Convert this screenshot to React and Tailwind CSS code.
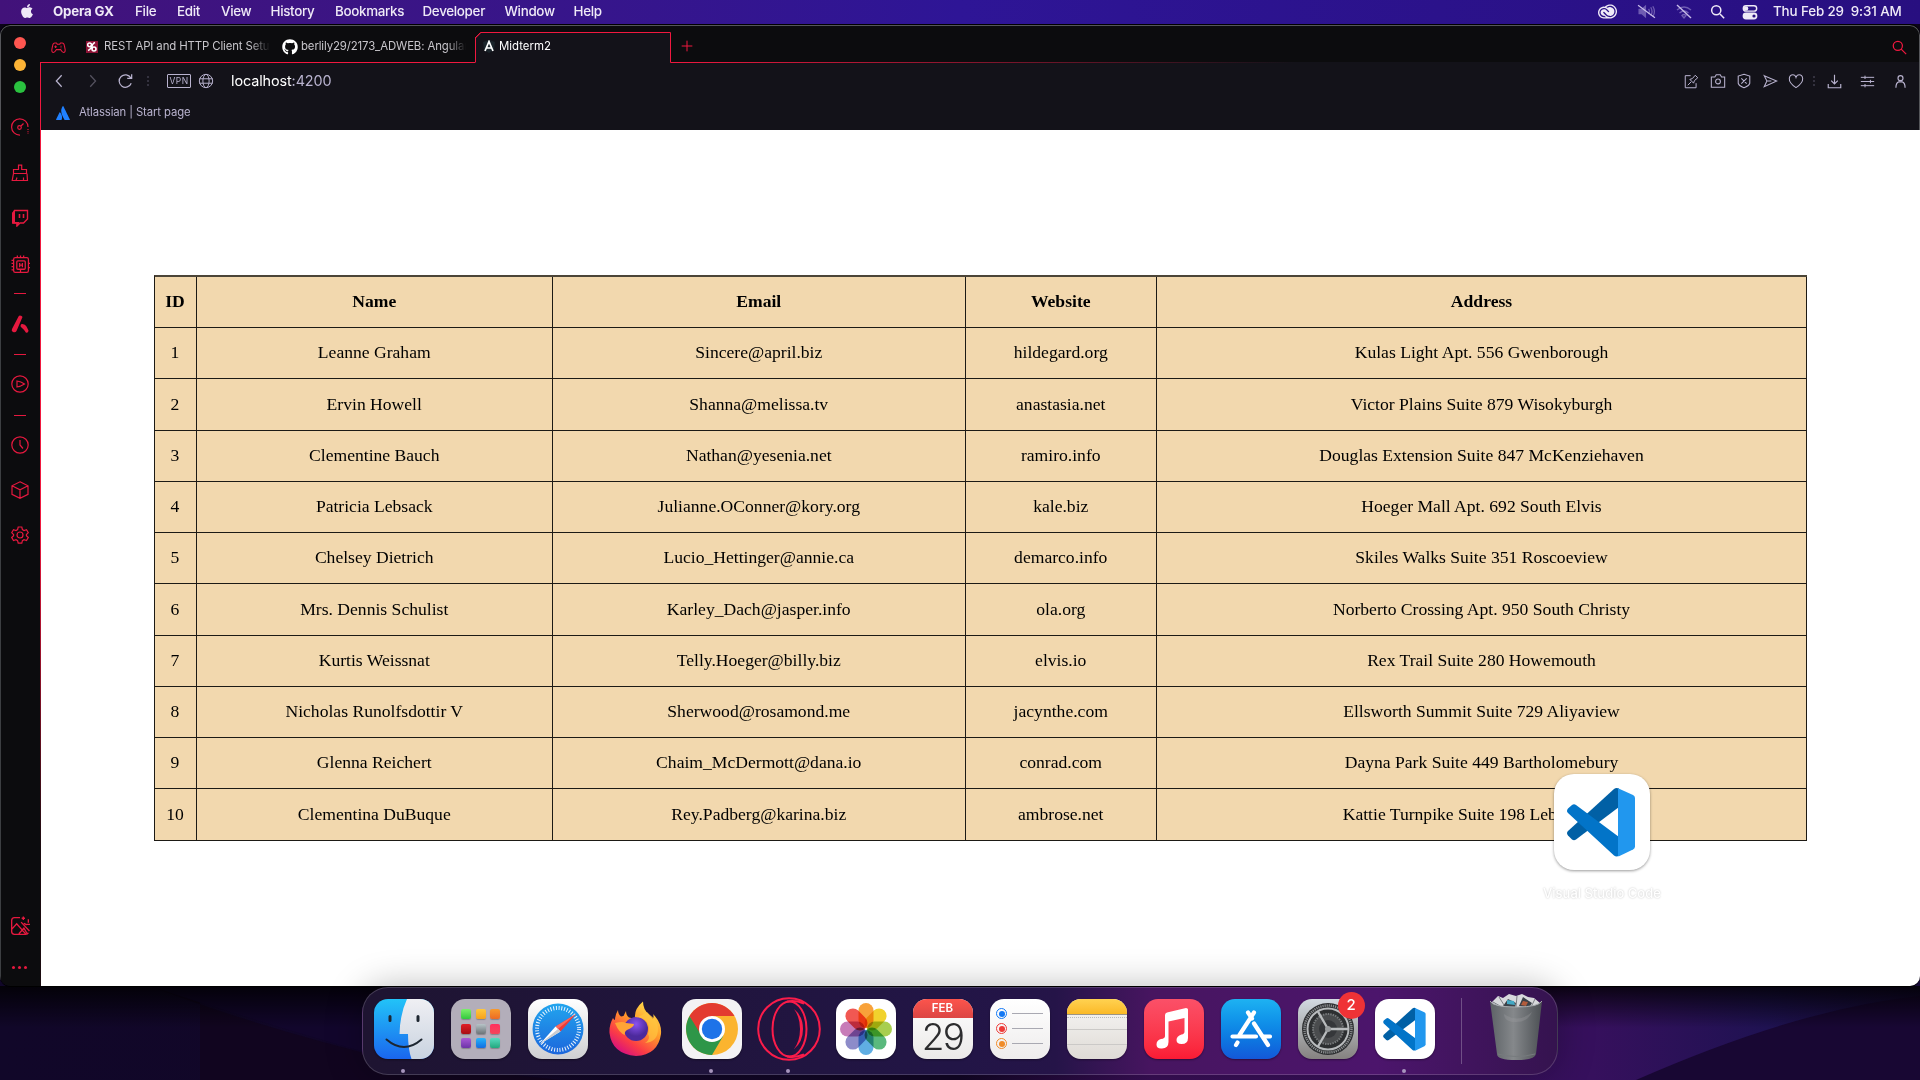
import React from "react";
import { FaApple, FaGithub, FaAtlassian } from "react-icons/fa";
import { SiAdobecreativecloud } from "react-icons/si";

const MENUS = [
  ["File", "w-[42px]"], ["Edit", "w-[44px]"], ["View", "w-[49.5px]"], ["History", "w-[64.5px]"],
  ["Bookmarks", "w-[87.5px]"], ["Developer", "w-[82px]"], ["Window", "w-[69px]"], ["Help", "w-[40px]"],
];

const USERS = [
  ["Leanne Graham", "Sincere@april.biz", "hildegard.org", "Kulas Light Apt. 556 Gwenborough"],
  ["Ervin Howell", "Shanna@melissa.tv", "anastasia.net", "Victor Plains Suite 879 Wisokyburgh"],
  ["Clementine Bauch", "Nathan@yesenia.net", "ramiro.info", "Douglas Extension Suite 847 McKenziehaven"],
  ["Patricia Lebsack", "Julianne.OConner@kory.org", "kale.biz", "Hoeger Mall Apt. 692 South Elvis"],
  ["Chelsey Dietrich", "Lucio_Hettinger@annie.ca", "demarco.info", "Skiles Walks Suite 351 Roscoeview"],
  ["Mrs. Dennis Schulist", "Karley_Dach@jasper.info", "ola.org", "Norberto Crossing Apt. 950 South Christy"],
  ["Kurtis Weissnat", "Telly.Hoeger@billy.biz", "elvis.io", "Rex Trail Suite 280 Howemouth"],
  ["Nicholas Runolfsdottir V", "Sherwood@rosamond.me", "jacynthe.com", "Ellsworth Summit Suite 729 Aliyaview"],
  ["Glenna Reichert", "Chaim_McDermott@dana.io", "conrad.com", "Dayna Park Suite 449 Bartholomebury"],
  ["Clementina DuBuque", "Rey.Padberg@karina.biz", "ambrose.net", "Kattie Turnpike Suite 198 Lebsackbury"],
];

function Line({ size = 18, w = 1.2, className = "", children }) {
  return (
    <svg width={size} height={size} viewBox="0 0 18 18" fill="none" stroke="currentColor" strokeWidth={w} className={"shrink-0 " + className}>
      {children}
    </svg>
  );
}

function Wallpaper() {
  return (
    <svg className="absolute inset-0" width="1920" height="1080" viewBox="0 0 1920 1080" preserveAspectRatio="none">
      <defs>
        <linearGradient id="wp" x1="0" x2="1" y1="0" y2="0">
          <stop offset="0" stopColor="#110729" /><stop offset=".5" stopColor="#120626" />
          <stop offset=".6" stopColor="#3a0f58" /><stop offset=".83" stopColor="#36105d" />
          <stop offset=".92" stopColor="#1f1252" /><stop offset="1" stopColor="#170a38" />
        </linearGradient>
        <linearGradient id="wpshade" x1="0" x2="0" y1="0" y2="1">
          <stop offset="0" stopColor="#000" stopOpacity=".8" /><stop offset="1" stopColor="#000" stopOpacity="0" />
        </linearGradient>
      </defs>
      <rect width="1920" height="1080" fill="#0b0418" />
      <rect y="970" width="1920" height="110" fill="url(#wp)" />
      <path d="M150 986 Q250 1025 400 1062 L560 1080 H200 V986 Z" fill="#12051d" opacity=".8" />
      <path d="M150 986 Q250 1020 400 1062 V986 Z" fill="#12062c" />
      <path d="M1636 1080 Q1800 1008 1920 996 V1080 Z" fill="#180733" />
      <rect y="986" width="1920" height="42" fill="url(#wpshade)" />
    </svg>
  );
}

function MenuBar() {
  return (
    <div className="relative flex h-6 items-center bg-linear-to-r from-[#42127a] via-[#2e1596] to-[#280f80] pb-px text-[13.4px] font-medium text-[#efeaf7]">
      <div className="flex w-[53px] justify-center pb-px"><FaApple size={16} /></div>
      <div className="w-[82px] whitespace-nowrap text-[13.3px] font-bold tracking-[-0.2px]">Opera GX</div>
      {MENUS.map(([m, w]) => <div key={m} className={w + " whitespace-nowrap tracking-[-0.32px]"}>{m}</div>)}
      <div className="flex-1" />
      <div className="flex h-full w-[175px] items-center">
        <SiAdobecreativecloud size={19} className="mr-[20px]" />
        <Line size={19} w={1.2} className="mr-[19px] text-[#6f5cb2]">
          <path d="M2 7v4h2.500l3.500 3V4L4.500 7z" fill="currentColor" /><path d="M11 6.500q1.500 2.500 0 5M13 5q2.500 4 0 8M15 4q3 5 0 10" /><path d="M1 3l16 12" stroke="#c8bde8" />
        </Line>
        <Line size={18} w={1.4} className="mr-[17px] text-[#6f5cb2]">
          <path d="M2 7q7-6 14 0M4.500 10q4.500-4 9 0M7 12.500q2-2 4 0L9 15z" /><path d="M2 2l14 13" stroke="#c8bde8" />
        </Line>
        <Line size={15} w={1.8} className="mr-[17px]"><circle cx="7.500" cy="7.500" r="5.500" /><path d="M12 12l5 5" /></Line>
        <Line size={16} w={1.6}><rect x="1.500" y="2" width="15" height="6" rx="3" /><rect x="1.500" y="10.500" width="15" height="6" rx="3" fill="currentColor" /><circle cx="4.500" cy="5" r="2.600" fill="currentColor" stroke="none" /><circle cx="13.500" cy="13.500" r="1.800" fill="#28107f" stroke="none" /></Line>
      </div>
      <div className="w-[147px] whitespace-pre tracking-[-0.13px]">Thu Feb 29  9:31 AM</div>
    </div>
  );
}

function Sidebar() {
  const cell = "flex w-full shrink-0 items-center justify-center ";
  return (
    <div className="flex w-10 shrink-0 flex-col items-center border-l border-[#3d3f42] bg-[#0c0c0e] pr-[2px] pt-[7px] text-[#e6193f]">
      {["bg-[#ff5650]", "bg-[#fdb436]", "bg-[#2ac23f]"].map((c) => (
        <div key={c} className={cell + "h-[22px]"}><div className={"h-3 w-3 rounded-full " + c} /></div>
      ))}
      <div className={cell + "mt-[6px] h-[46px]"}>
        <Line><path d="M9 17.200A8.200 8.200 0 1 1 17 9" /><circle cx="8.500" cy="9.500" r="1.800" /><path d="M10 8l2.500-2.500" /><path d="M17 11v5" strokeDasharray="1 1.200" /></Line>
      </div>
      <div className={cell + "h-[46px]"}>
        <Line className="-mt-px ml-px"><path d="M7.500 5.500V1.200h3.200v4.300h4.800v4h-13v-4zM2.500 9.500L1.200 16.500h15.300l-.5-7M5 16.500l1-3M12.500 16.500v-3" /></Line>
      </div>
      <div className={cell + "h-[45px]"}>
        <Line w={1.4} className="-mt-px ml-px"><path d="M3.500 1.500h13v8.500l-4 4h-3.500l-3 3v-3H2V4z" /><path d="M1 4l3-3v12h4v1.500l-2.500 3v-3H1z" fill="currentColor" stroke="none" /><path d="M8.500 5v4M12.500 5v4" strokeWidth="1.600" /></Line>
      </div>
      <div className={cell + "h-[46px]"}>
        <Line size={19} className="ml-[2px]"><rect x="2.500" y="2.500" width="14" height="14" rx="1.500" /><rect x="5.500" y="5.500" width="8" height="8" rx="1" /><path d="M8.200 7.500v4M10.800 7.500v4M8.200 9.500h2.600M6 .5v2M9 .5v2M12 .5v2M.5 5h2M.5 8h2M.5 11h2M.5 14h2M16.500 8h1.500M16.500 12h1.500M9 13.500v3" /></Line>
      </div>
      <div className={cell + "h-3"}><div className="h-px w-3 bg-current" /></div>
      <div className={cell + "h-[50px]"}>
        <Line w={0}><path d="M9 .5q2 0 2.500 1.500L5.500 16q-1 2-3.500 1Q0 16 1 14L7.500 1.500Q8 .5 9 .5zM10.500 9q3.500-.5 5 2.500l2 4q0 2.500-2.500 2.200-2.500-3.700-4.500-5.200-2-1.500 0-3.500z" fill="currentColor" /></Line>
      </div>
      <div className={cell + "h-[10px]"}><div className="h-px w-3 bg-current" /></div>
      <div className={cell + "h-[50px]"}><Line><circle cx="9" cy="9" r="8.200" /><path d="M6 6v6q3.500-.5 7.500-3Q10 6.500 6 6z" /></Line></div>
      <div className={cell + "h-3"}><div className="h-px w-3 bg-current" /></div>
      <div className={cell + "h-[47px]"}><Line><circle cx="9" cy="9" r="8.200" /><path d="M9 4v5l3 3.500" /></Line></div>
      <div className={cell + "h-[45px]"}><Line className="-mt-px"><path d="M9 .8l8 4v8.500l-8 4-8-4V4.800zM1 4.800l8 4 8-4M9 8.800v8.500" /></Line></div>
      <div className={cell + "h-[45px]"}>
        <Line className="-mt-px"><path d="M7.200 1h3.600l.6 2.500 1.600 1 2.500-.8 1.800 3-1.900 1.800v1.200l1.900 1.800-1.800 3-2.500-.8-1.600 1-.6 2.500H7.200l-.6-2.500-1.600-1-2.500.8-1.800-3 1.900-1.800V8.500L.7 6.700l1.800-3 2.500.8 1.600-1z" /><circle cx="9" cy="9" r="3" /></Line>
      </div>
      <div className="flex-1" />
      <div className={cell + "h-[44px]"}>
        <Line size={20} className="ml-px"><path d="M9 1.500H4Q1.500 1.500 1.500 4v10q0 2.500 2.500 2.500h10q2 0 2.500-1.500M1.500 12l4.500-5 8.500 9.500M8 16l4.500-5 3 5M10 5.500l7.500 8M12 .5v3M10.500 2h3M16.500 3v3M15 7.500h3M12.500 6.500l2.500 1.500" /></Line>
      </div>
      <div className={cell + "h-[38px] gap-[3px]"}>
        {[0, 1, 2].map((i) => <div key={i} className="h-[3px] w-[3px] rounded-full bg-current" />)}
      </div>
    </div>
  );
}

function TabBar() {
  return (
    <div className="flex h-[38px] shrink-0 bg-[#0c0c0e] text-[11.4px] text-[#c8c6cb]">
      <div className="flex w-[435px] items-center border-b border-[#f0183f] pt-[7px]">
        <div className="flex w-[46px] justify-start pl-[11px] text-[#e6193f]">
          <Line size={15} w={1.3}><path d="M4.500 3.500h2l1 1.500h3l1-1.500h2q2 0 2.500 3l1 5q.3 3.500-2 3.500-1.500 0-3.500-3.500h-5Q4.500 15 3 15 .7 15 1 11.500l1-5q.5-3 2.500-3zM4 8h3M5.500 6.500v3M12 7v1M12 9v1" /></Line>
        </div>
        <div className="flex w-[196px] items-center">
          <svg width="12" height="12" viewBox="0 0 12 12" className="mr-[6px] shrink-0"><rect width="12" height="12" fill="#8d1436" /><circle cx="3.600" cy="3.800" r="1.900" stroke="#fff" strokeWidth="1.500" fill="none" /><circle cx="8" cy="8" r="2" stroke="#fff" strokeWidth="1.600" fill="none" /><path d="M5.500 4q0 4-3.500 5.500M6 8q-.5-5 3-6.500" stroke="#fff" strokeWidth="1.400" fill="none" /></svg>
          <div className="w-[166px] overflow-hidden whitespace-nowrap mask-r-from-88% mask-r-to-100% tracking-[-0.12px]">REST API and HTTP Client Setup</div>
        </div>
        <div className="flex items-center">
          <FaGithub size={16} className="mr-[3px] shrink-0 text-white" />
          <div className="w-[165px] overflow-hidden whitespace-nowrap mask-r-from-88% mask-r-to-100% tracking-[-0.12px]">berlily29/2173_ADWEB: Angular</div>
        </div>
      </div>
      <div className="relative flex w-[196px] items-center pt-[6px]">
        <svg className="absolute left-0 top-0" width="196" height="38" viewBox="0 0 196 38"><path d="M0 38V13L6 7.500H195.500V38z" fill="#131219" /><path d="M-.5 37.500V13.500L5.500 7.500H195.500V37.500H196" fill="none" stroke="#f0183f" /><path d="M.5 37.500V13L6 7.500" fill="none" stroke="#f0183f" /></svg>
        <div className="relative flex items-center pl-[8px] text-white">
          <svg width="12" height="13" viewBox="0 0 12 13" className="mr-[4px]"><path d="M6 0l6 2-1 8-5 3-5-3-1-8z" fill="#1b242b" /><path d="M2 11L6 1.500 10 11M3.500 8h5" fill="none" stroke="#fff" strokeWidth="1.700" /></svg>
          <span>Midterm2</span>
        </div>
      </div>
      <div className="flex flex-1 items-center justify-between border-b pl-[10px] pr-[13px] pt-[4px] text-[#f0183f] [border-image:linear-gradient(to_right,#f0183f,#131219_50%)_1]">
        <Line size={12} w={1.5}><path d="M9 1v16M1 9h16" /></Line>
        <Line size={15} w={1.5} className="mt-[3px]"><circle cx="7" cy="7" r="5.500" /><path d="M11 11l6 6" /></Line>
      </div>
    </div>
  );
}

function Toolbar() {
  const dots = (
    <svg width="2" height="12" viewBox="0 0 2 12" fill="#34323f" className="shrink-0"><rect y="1" width="2" height="2" /><rect y="5" width="2" height="2" /><rect y="9" width="2" height="2" /></svg>
  );
  return (
    <div className="flex h-[36px] shrink-0 items-center text-[#b9b3cf]">
      <Line size={16} className="ml-[10px]" w={1.4}><path d="M12 2.500L6 9l6 6.500" /></Line>
      <Line size={16} className="ml-[17px] text-[#55525f]" w={1.4}><path d="M7 2.500l6 6.500-6 6.500" /></Line>
      <Line size={16} className="ml-[17px]" w={1.4}><path d="M15.500 5.500A7 7 0 1 0 16 11.500M16.500 1.500v4.500h-5" /></Line>
      <div className="ml-[14px] flex">{dots}</div>
      <div className="ml-[18px] flex h-[14px] w-6 items-center justify-center rounded-[1px] border border-[#b9b3cf] text-[8.5px] leading-none tracking-[0.5px]">VPN</div>
      <Line size={16} className="ml-[7px]" w={1.1}><circle cx="9" cy="9" r="7.500" /><ellipse cx="9" cy="9" rx="3.500" ry="7.500" /><path d="M1.500 6.500h15M1.500 11.500h15" /></Line>
      <div className="ml-[17px] text-[14.4px] tracking-[-0.1px]"><span className="text-white">localhost</span>:4200</div>
      <div className="flex-1" />
      <Line size={15} className="mr-[11px]" w={1.2}><path d="M8 2H1.500v14.500h13V11M4.500 13.500l4-4M7 6.500l4.500 4.500 1-3L16.500 4.500 13.500 1.500 10 5.500z" /></Line>
      <Line size={16} className="mr-[10px]" w={1.2}><path d="M1.500 4.500h4L7 2h4.500L13 4.500h3.500v11.500h-15z" /><circle cx="9" cy="9.500" r="2.700" /></Line>
      <Line size={16} className="mr-[10px]" w={1.2}><path d="M9 1.500l6.500 2v8q-1 3-6.500 5-5.500-2-6.500-5v-8zM6 6l6 6M12 6l-6 6" /></Line>
      <Line size={16} className="mr-[10px]" w={1.2}><path d="M2.500 3l14 6-14 6.500 3-6.500zM5.500 9h5" /></Line>
      <Line size={16} className="mr-[9px]" w={1.2}><path d="M9 16.500Q1 11 1.500 6 2 2 5.500 2 8 2 9 5q1-3 3.500-3Q16 2 16.500 6 17 11 9 16.500z" /></Line>
      {dots}
      <Line size={15} className="ml-[12px] mr-[18px]" w={1.4}><path d="M1.500 12v4.500h15V12M9 1v11M5 8l4 4 4-4" /></Line>
      <Line size={15} className="mr-[18px]" w={1.2}><path d="M1 4h16M1 9h16M1 14h16M6 2v4M12.500 7v4M6 12v4" /></Line>
      <Line size={15} className="mr-[12px]" w={1.4}><circle cx="9" cy="5" r="3" /><path d="M3.500 16.500q0-6 3.500-7h4q3.500 1 3.500 7" /></Line>
    </div>
  );
}

function Table() {
  const cell = "border-b border-r border-[#1d1a15] flex items-center justify-center pb-[1px]";
  const cols = "grid grid-cols-[42px_356.5px_412.5px_191.5px_650px]";
  return (
    <div className="ml-[112.5px] mt-[145px] flex w-[1653.5px] flex-col border-l border-t-2 border-[#1d1a15] border-t-[#4c4538] bg-[#f2d8ae] font-['Liberation_Serif',serif] text-[17.6px] text-black">
      <div className={cols + " h-[51px] font-bold"}>
        {["ID", "Name", "Email", "Website", "Address"].map((h) => <div key={h} className={cell}>{h}</div>)}
      </div>
      {USERS.map((u, i) => (
        <div key={i} className={cols + " h-[51.25px]"}>
          <div className={cell}>{i + 1}</div>
          {u.map((v) => <div key={v} className={cell}>{v}</div>)}
        </div>
      ))}
    </div>
  );
}

function VSCodeLogo({ size }) {
  return (
    <svg width={size} height={size} viewBox="0 0 96 96">
      <path d="M60 15q2-1.500 5-.5V33L22 65.500q-2 1.500-4 0L14 61.500q-2-2.500 0-4.500z" fill="#0160a5" />
      <path d="M60 81.500q2 1.500 5 .5V63L22 31q-2-1.500-4 0l-4 3.500q-2 2.500 0 4.500z" fill="#0274c8" />
      <path d="M64 14.200L79 21q2 1 2 3v48.500q0 2-2 3L65 82.300l-1-.3z" fill="#2197ee" />
    </svg>
  );
}

function Tile({ className = "", children }) {
  return <div className={"flex h-[60px] w-[60px] items-center justify-center overflow-hidden rounded-[14px] shadow-[0_1px_2px_rgba(0,0,0,0.4)] " + className}>{children}</div>;
}

function Finder() {
  return (
    <Tile>
      <svg width="60" height="60" viewBox="0 0 60 60">
        <defs><linearGradient id="fb" x2="0" y2="1"><stop stopColor="#22c3f8" /><stop offset="1" stopColor="#1a66ee" /></linearGradient><linearGradient id="fw" x2="0" y2="1"><stop stopColor="#efeff3" /><stop offset="1" stopColor="#c9d3e0" /></linearGradient></defs>
        <rect width="60" height="60" fill="url(#fb)" />
        <path d="M33 0Q26 15 25.500 35h8.500q0 15 3.500 25H60V0z" fill="url(#fw)" />
        <path d="M16 17.500v4M44 17.500v4" stroke="#1d2630" strokeWidth="3" strokeLinecap="round" />
        <path d="M12.500 40.500q17.500 15 35 0" fill="none" stroke="#1d2630" strokeWidth="2" strokeLinecap="round" />
      </svg>
    </Tile>
  );
}

function Launchpad() {
  const c = ["from-[#7af06a] to-[#2fc83d]", "from-[#ffc83d] to-[#f5a11c]", "from-[#f89a2c] to-[#ec6a24]", "from-[#e01f28] to-[#a80d14]", "from-[#b7c4c8] to-[#6d7478]", "from-[#ff2f5e] to-[#f5455a]", "from-[#a95ad6] to-[#6d34a8]", "from-[#28b4fa] to-[#176ce0]", "from-[#56dcc0] to-[#20a87e]"];
  return <Tile className="bg-[#b3aeba]"><div className="grid grid-cols-3 gap-[4.5px]">{c.map((x) => <div key={x} className={"h-[10px] w-[10px] rounded-[2px] bg-linear-to-b shadow-[0_1px_1px_rgba(0,0,0,0.25)] " + x} />)}</div></Tile>;
}

function Safari() {
  return (
    <Tile className="bg-linear-to-b from-white to-[#cfcfd2]">
      <svg width="52" height="52" viewBox="0 0 52 52">
        <defs><linearGradient id="sf" x2="0" y2="1"><stop stopColor="#22a5ee" /><stop offset="1" stopColor="#1c66dc" /></linearGradient></defs>
        <circle cx="26" cy="26" r="25.500" fill="url(#sf)" />
        <circle cx="26" cy="26" r="21" fill="none" stroke="#fff" strokeWidth="4" strokeDasharray="1 1.749" opacity=".9" />
        <path d="M44 11L28.500 28.500l-5-5z" fill="#ee3b38" /><path d="M44 11L23.500 23.500l2.500 2.500z" fill="#f96a60" />
        <path d="M8 41l15.500-17.500 5 5z" fill="#fff" /><path d="M8 41l18-15 2.500 2.500z" fill="#c9ccd0" />
      </svg>
    </Tile>
  );
}

function Firefox() {
  return (
    <div className="flex h-[60px] w-[60px] items-center justify-center">
      <svg width="60" height="60" viewBox="0 0 60 60">
        <defs>
          <linearGradient id="ff" x1=".9" y1=".1" x2=".3" y2="1"><stop stopColor="#ffe14c" /><stop offset=".4" stopColor="#ff9a2a" /><stop offset=".75" stopColor="#fb3d45" /><stop offset="1" stopColor="#d8107f" /></linearGradient>
          <radialGradient id="fp" cx=".5" cy=".3"><stop stopColor="#8a52f0" /><stop offset="1" stopColor="#4c2a9c" /></radialGradient>
        </defs>
        <path d="M13 11q0 4 3 6.500l2.500-.5 2.500-5q0 4 3 6.500 2 .5 6 .5-1-9 8-16.500 0 8 6 13l4 4.500q1-3 0-5 9 9 8 20-3 21-25 22Q7 55 4.500 34 4 26 8 19q1 2 2 2 0-5 3-10z" fill="url(#ff)" />
        <circle cx="31" cy="30" r="12" fill="url(#fp)" />
        <path d="M10 24q8-2 11 0l8 1q0 3-7 6-3 2-2 5-6-2-10-12z" fill="#ffa436" />
        <path d="M30 19q5-2 10 2 6 5 3 14 3 5-3 9 13-1 13-14 0-9-8-14l-3-3-5 3z" fill="#ffc640" opacity=".7" />
      </svg>
    </div>
  );
}

function Chrome() {
  return (
    <Tile className="bg-[#f3f2f4]">
      <svg width="54" height="54" viewBox="0 0 54 54">
        <circle cx="27" cy="27" r="26" fill="#fbb42f" />
        <path d="M4.500 14A26 26 0 0 1 49.500 14H27L14 33z" fill="#e33b30" />
        <path d="M4.500 14A26 26 0 0 0 27 53L38.500 33.500 27 38q-8 0-11.500-6z" fill="#2e9648" />
        <circle cx="27" cy="27" r="13" fill="#fff" /><circle cx="27" cy="27" r="10.200" fill="#1e73e8" />
      </svg>
    </Tile>
  );
}

function Opera() {
  return (
    <div className="-mx-[2px] flex h-[64px] w-[64px] items-center justify-center">
      <svg width="64" height="64" viewBox="0 0 64 64" fill="none" stroke="#fb1c4a" strokeWidth="2">
        <circle cx="32" cy="32" r="30.800" />
        <ellipse cx="32.500" cy="32" rx="17" ry="27.500" />
        <path d="M30 4.600Q38 3 47 6.500M30 59.400Q38 61 47 57.500" />
        <path d="M37 12q9 7 9 20t-9 20q6-8 6-20T37 12z" fill="#fb1c4a" stroke="none" />
      </svg>
    </div>
  );
}

function Photos() {
  const c = ["#f7951e", "#efcc10", "#9cc736", "#43b06b", "#4aa3df", "#7d7cc2", "#c06aae", "#f0413a"];
  return (
    <Tile className="bg-white">
      <svg width="56" height="56" viewBox="-28 -28 56 56">
        {c.map((f, i) => <rect key={f} x="-7.500" y="-26" width="15" height="25" rx="7.500" fill={f} opacity=".88" transform={"rotate(" + i * 45 + ")"} className="mix-blend-multiply" />)}
      </svg>
    </Tile>
  );
}

function Calendar() {
  return (
    <Tile className="flex-col bg-linear-to-b from-white to-[#ebe9e8]">
      <div className="flex h-[19px] w-full items-center justify-center bg-linear-to-b from-[#fc544c] to-[#dc4644] pt-[2px] text-[11.5px] font-semibold text-white">FEB</div>
      <div className="flex h-[41px] w-full items-center justify-center pb-[3px] text-[37px] font-light leading-none tracking-[-1.8px] text-[#2c2c2e]">29</div>
    </Tile>
  );
}

function Reminders() {
  return (
    <Tile className="flex-col gap-[4px] bg-linear-to-b from-white to-[#eeecec]">
      {[["border-[#1378f4]", "bg-[#1378f4]"], ["border-[#ed3b38]", "bg-[#ed3b38]"], ["border-[#f08b28]", "bg-[#f08b28]"]].map(([b, f]) => (
        <div key={f} className="flex w-[47px] items-center justify-between">
          <div className={"flex h-[11px] w-[11px] items-center justify-center rounded-full border " + b}><div className={"h-[6px] w-[6px] rounded-full " + f} /></div>
          <div className="h-px w-[31px] bg-[#a9a9b2]" />
        </div>
      ))}
    </Tile>
  );
}

function Notes() {
  return (
    <Tile className="flex-col justify-start! bg-linear-to-b from-[#f8f7f6] to-[#dfdbd6]">
      <div className="h-[15px] w-full bg-linear-to-b from-[#ffd250] to-[#fbb924]" />
      <div className="h-px w-full bg-[#9c9484]" />
      <div className="mt-[2px] w-full border-t border-dotted border-[#bbb]" />
      <div className="mt-[11px] h-px w-full bg-[#cbc9c7]" />
      <div className="mt-[14px] h-px w-full bg-[#cbc9c7]" />
    </Tile>
  );
}

function Music() {
  return (
    <Tile className="bg-linear-to-b from-[#fb5068] to-[#fa1a34]">
      <svg width="60" height="60" viewBox="0 0 60 60" fill="#fff"><path d="M21 16q0-2 2-2.500L42 9q2 0 2 1.500V39q0 6-6.500 6-5 0-5-4t5-5.500q3-.5 3-3V19l-16 3.500V43q0 6-6.500 6.500-5.500.5-5.500-4T17 40q4-.5 4-3z" /></svg>
    </Tile>
  );
}

function AppStore() {
  return (
    <Tile className="bg-linear-to-b from-[#1eb2f2] to-[#1458d8]">
      <svg width="60" height="60" viewBox="0 0 60 60" stroke="#fff" strokeWidth="4.200" strokeLinecap="round"><path d="M33 13.500L18.500 36M27 13.500l4 6M33 24.500l14 21.500M11.500 37.500h23.500M43 37.500h6M16.500 43.500l-1.500 2.500" /></svg>
    </Tile>
  );
}

function Settings() {
  return (
    <Tile className="bg-linear-to-b from-[#d3dbe2] to-[#858280]">
      <svg width="56" height="56" viewBox="-28 -28 56 56" fill="none">
        <circle r="26" fill="#2d2f31" /><circle r="23.500" stroke="#8b8e90" strokeWidth="2.500" strokeDasharray="1.200 .93" />
        <circle r="20.500" stroke="#b8bbbd" strokeWidth="2" /><circle r="15" fill="#4a4c4e" stroke="#75787a" strokeWidth="2" strokeDasharray="1.500 1" />
        <circle r="9" fill="#35373a" />
        <path d="M0 0H20M0 0L-10-17.300M0 0L-10 17.300" stroke="#b8bbbd" strokeWidth="2.300" /><circle r="3" fill="#999c9e" />
      </svg>
    </Tile>
  );
}

function Trash() {
  return (
    <svg width="54" height="70" viewBox="0 0 54 70">
      <defs><linearGradient id="tr"><stop stopColor="#5d6266" /><stop offset=".45" stopColor="#85888b" /><stop offset="1" stopColor="#4c5054" /></linearGradient></defs>
      <path d="M3 10L9 4l5 2 6-4 7 2 6-2 6 3 6 1 6 5-4 6H6z" fill="#d8d9dc" />
      <path d="M14 14l5-7 8 4-1 5zM30 14l4-9 9 6-3 5z" fill="#3b4148" /><path d="M18 8l7 1 1 4-8-1z" fill="#43a8c4" /><path d="M34 9l5 1-2 4-5-1z" fill="#b25c3c" /><path d="M4 10l7 4M10 5l5 8M28 4l-1 11M46 7l-4 8" stroke="#7b7e83" />
      <path d="M1 9q3 6 26 6t26-6l-6 53q-1 6-20 6T8 62z" fill="url(#tr)" />
      <path d="M1 9q3 6 26 6t26-6" fill="none" stroke="#a8acaf" />
      <path d="M9 62q18 5 37 0" fill="none" stroke="#777b7e" strokeWidth="1" /><path d="M15 22q14 10 28-2-4 10-16 10T15 22z" fill="#a1a3a6" opacity=".3" />
    </svg>
  );
}

function Dock() {
  const items = [[Finder, 1], [Launchpad, 0], [Safari, 0], [Firefox, 0], [Chrome, 1], [Opera, 1], [Photos, 0], [Calendar, 0], [Reminders, 0], [Notes, 0], [Music, 0], [AppStore, 0], [Settings, 0]];
  const slot = "relative flex h-full w-[60px] flex-col items-center justify-center pb-[5px]";
  const dot = <div className="absolute bottom-[1px] left-[27px] h-1 w-1 rounded-full bg-[#a795bd]" />;
  return (
    <div className="relative mx-auto mt-[1px] flex h-[88px] w-[1196px] items-center gap-[17px] rounded-[26px] border border-[#ffffff2b] pl-[10.5px] shadow-[0_0_36px_rgba(0,0,0,0.28)] bg-[linear-gradient(90deg,#1e1431,#221546_50%,#251448_58%,#471560_66%,#4c156c_85%,#35134f)]">
      {items.map(([C, running], i) => (
        <div key={i} className={slot}>
          <C />
          {running ? dot : null}
          {C === Settings && <div className="absolute -right-[7px] top-[4px] flex h-[27px] w-[27px] items-center justify-center rounded-full bg-[#ef3236] text-[15px] font-medium text-white">2</div>}
        </div>
      ))}
      <div className={slot}><Tile className="bg-white"><VSCodeLogo size={60} /></Tile>{dot}</div>
      <div className="ml-[9px] h-[66px] w-px bg-[#ffffff40]" />
      <div className="ml-[10px] flex h-full items-start pt-[4px]"><Trash /></div>
    </div>
  );
}

export default function App() {
  return (
    <div className="relative flex h-[1080px] w-[1920px] flex-col overflow-hidden bg-black font-[Inter,sans-serif]">
      <Wallpaper />
      <MenuBar />
      <div className="relative mt-px flex h-[961px] shrink-0 overflow-hidden rounded-[10px] shadow-[0_-1px_0_#000,0_1px_0_#000]">
        <Sidebar />
        <div className="flex min-w-0 flex-1 flex-col bg-[#131219]">
          <TabBar />
          <div className="flex flex-1 flex-col border-l [border-image:linear-gradient(to_bottom,#f0183f_50%,#1a0b10_85%)_1]">
            <Toolbar />
            <div className="flex h-[31px] shrink-0 items-center pb-[4px] pl-[15px] text-[11.3px] text-[#b9b3cf]">
              <FaAtlassian size={14} className="mr-[9px] text-[#2080ff]" />
              <span className="tracking-[-0.1px]">Atlassian | Start page</span>
            </div>
            <div className="flex-1 bg-white"><Table /></div>
          </div>
        </div>
        <div className="pointer-events-none absolute inset-0 h-[105px] rounded-t-[10px] border-x border-t border-[#55565a]" />
      </div>
      <Dock />
      <div className="absolute left-[1532px] top-[774px] flex w-[140px] flex-col items-center">
        <div className="flex h-24 w-24 items-center justify-center rounded-[20px] bg-white shadow-[0_1px_3px_rgba(0,0,0,0.4)]"><VSCodeLogo size={96} /></div>
        <div className="mt-[14px] text-[13px] font-medium leading-[18px] text-white [text-shadow:0_0_2px_rgba(0,0,0,0.25)]">Visual Studio Code</div>
      </div>
    </div>
  );
}
